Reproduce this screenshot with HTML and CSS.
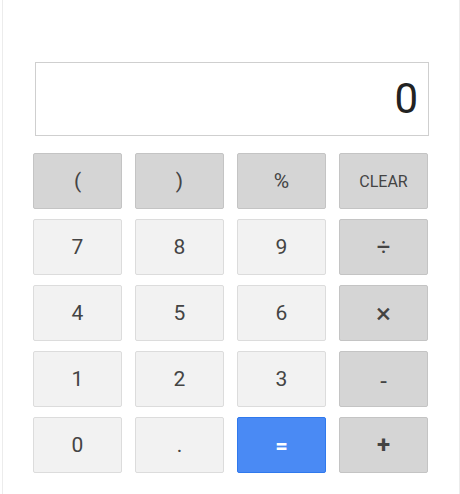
FILE: index.html
```html
<!DOCTYPE html>
<html>
<head>
<meta charset="utf-8">
<link rel="stylesheet" href="styles.css">
</head>
<body>
<div class="card">
  <div class="display"><span class="value">0</span></div>
  <div class="keys">
    <div class="key op">(</div>
    <div class="key op">)</div>
    <div class="key op">%</div>
    <div class="key op clear">CLEAR</div>
    <div class="key num">7</div>
    <div class="key num">8</div>
    <div class="key num">9</div>
    <div class="key op sym">÷</div>
    <div class="key num">4</div>
    <div class="key num">5</div>
    <div class="key num">6</div>
    <div class="key op sym times">×</div>
    <div class="key num">1</div>
    <div class="key num">2</div>
    <div class="key num">3</div>
    <div class="key op sym minus">-</div>
    <div class="key num">0</div>
    <div class="key num">.</div>
    <div class="key eq">=</div>
    <div class="key op sym bold">+</div>
  </div>
</div>
</body>
</html>
```
FILE: styles.css
```css
html, body {
  margin: 0;
  padding: 0;
  background: #ffffff;
}
body {
  font-family: Roboto, "Liberation Sans", Arial, sans-serif;
  color: #333;
}
.card {
  margin: 0 0 0 2px;
  width: 458px;
  height: 494px;
  box-sizing: border-box;
  border-left: 1px solid #ececec;
  border-right: 1px solid #ececec;
  padding: 62px 0 0 30px;
}
.display {
  width: 394px;
  height: 74px;
  box-sizing: border-box;
  margin: 0 0 17px 2px;
  border: 1px solid #cfcfcf;
  display: flex;
  align-items: center;
  justify-content: flex-end;
  padding-right: 10px;
}
.value {
  font-size: 42px;
  color: #222;
  line-height: 1;
}
.keys {
  display: grid;
  grid-template-columns: repeat(4, 89px);
  grid-auto-rows: 56px;
  column-gap: 13px;
  row-gap: 10px;
}
.key {
  box-sizing: border-box;
  display: flex;
  align-items: center;
  justify-content: center;
  border-radius: 2px;
  font-size: 21px;
  color: #444;
}
.num {
  background: #f2f2f2;
  border: 1px solid #dcdcdc;
}
.op {
  background: #d5d5d5;
  border: 1px solid #c4c4c4;
}
.clear {
  font-size: 16px;
}
.sym {
  font-size: 24px;
}
.times {
  font-size: 28px;
}
.bold {
  font-weight: bold;
}
.minus {
  padding-top: 4px;
}
.eq {
  background: #4a8af4;
  border: 1px solid #3079ed;
  color: #fff;
  font-weight: bold;
  font-size: 22px;
}
```
